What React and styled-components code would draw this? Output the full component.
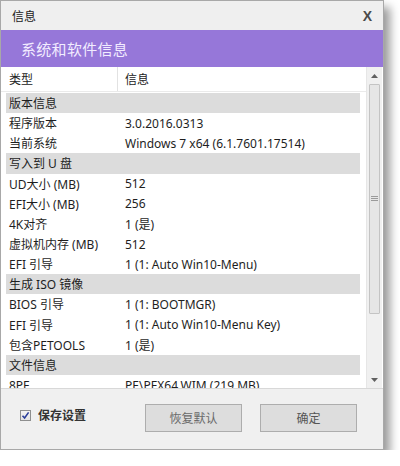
import React from 'react'
import styled, { createGlobalStyle } from 'styled-components'

const Global = createGlobalStyle`
  html, body { margin: 0; padding: 0; background: #ffffff; }
  body { font-family: "Noto Sans", "Noto Sans CJK SC", sans-serif; }
`

const Window = styled.div`
  width: 382px;
  height: 448px;
  border: 1px solid #a8a8a8;
  background: #f0f0f0;
  display: flex;
  flex-direction: column;
  box-shadow: 6px 7px 9px rgba(0, 0, 0, 0.4);
  overflow: hidden;
`

const TitleBar = styled.div`
  height: 29px;
  flex: none;
  display: flex;
  align-items: center;
  justify-content: space-between;
  padding: 0 11px 0 11px;
  background: #efefef;
  font-size: 12px;
  color: #222;
`

const Close = styled.span`
  font-family: "Liberation Sans", sans-serif;
  font-size: 14px;
  font-weight: bold;
  color: #4a4a4a;
`

const Banner = styled.div`
  height: 37px;
  flex: none;
  display: flex;
  align-items: center;
  padding-left: 20px;
  background: #9677d9;
  color: #f2ecff;
  font-size: 15px;
  letter-spacing: 0.3px;
`

const ListArea = styled.div`
  height: 321px;
  flex: none;
  display: flex;
  background: #ffffff;
  border-bottom: 1px solid #d8d8d8;
  overflow: hidden;
`

const Table = styled.div`
  flex: 1;
  display: flex;
  flex-direction: column;
  padding: 0 6px 0 5px;
`

const HeaderRow = styled.div`
  height: 24px;
  flex: none;
  display: grid;
  grid-template-columns: 112px 1fr;
  border-bottom: 1px solid #eaeaea;
  margin: 0 -6px 1px -5px;
  padding: 0 6px 0 5px;
  font-size: 12px;
  color: #222;
`

const HeadCell = styled.div`
  display: flex;
  align-items: center;
  padding-left: ${p => (p.$first ? '3px' : '7px')};
  border-right: ${p => (p.$first ? '1px solid #e2e2e2' : 'none')};
`

const Row = styled.div`
  height: 20.15px;
  flex: none;
  display: grid;
  grid-template-columns: 113px 1fr;
  align-items: center;
  font-size: 12px;
  color: #1e1e1e;
  background: ${p => (p.$group ? '#dcdcdc' : 'transparent')};
  white-space: nowrap;
`

const Cell = styled.div`
  padding-left: ${p => (p.$first ? '3px' : '6px')};
`

const Scrollbar = styled.div`
  width: 15px;
  flex: none;
  margin-right: 1px;
  display: flex;
  flex-direction: column;
  align-items: center;
  background: #f0f0f0;
  border-left: 1px solid #e6e6e6;
`

const Arrow = styled.div`
  height: 17px;
  flex: none;
  display: flex;
  align-items: center;
  justify-content: center;
`

const Thumb = styled.div`
  width: 11px;
  height: 230px;
  flex: none;
  box-sizing: border-box;
  border: 1px solid #c4c4c4;
  background: #e6e6e6;
  border-radius: 1px;
  display: flex;
  align-items: center;
  justify-content: center;
`

const Track = styled.div`
  flex: 1;
`

const Footer = styled.div`
  flex: 1;
  display: flex;
  align-items: center;
  padding: 0 26px 0 19px;
  background: #f0f0f0;
`

const Check = styled.label`
  display: flex;
  align-items: center;
  gap: 7px;
  font-size: 12px;
  color: #333;
  font-weight: 600;
  margin-right: auto;
  margin-top: -8px;
`

const Box = styled.span`
  width: 11px;
  height: 11px;
  box-sizing: border-box;
  border: 1px solid #8e8f8f;
  background: linear-gradient(#f4f4f4, #e4e4e4);
  display: flex;
  align-items: center;
  justify-content: center;
`

const Button = styled.div`
  width: 97px;
  height: 28px;
  box-sizing: border-box;
  margin-left: ${p => p.$gap || 0}px;
  margin-top: -3px;
  border: 1px solid #adadad;
  background: #dddddd;
  display: flex;
  align-items: center;
  justify-content: center;
  font-size: 12px;
  color: ${p => p.$color || '#555'};
`

const rows = [
  ['版本信息', '', true],
  ['程序版本', '3.0.2016.0313'],
  ['当前系统', 'Windows 7 x64 (6.1.7601.17514)'],
  ['写入到 U 盘', '', true],
  ['UD大小 (MB)', '512'],
  ['EFI大小 (MB)', '256'],
  ['4K对齐', '1 (是)'],
  ['虚拟机内存 (MB)', '512'],
  ['EFI 引导', '1 (1: Auto Win10-Menu)'],
  ['生成 ISO 镜像', '', true],
  ['BIOS 引导', '1 (1: BOOTMGR)'],
  ['EFI 引导', '1 (1: Auto Win10-Menu Key)'],
  ['包含PETOOLS', '1 (是)'],
  ['文件信息', '', true],
  ['8PE', 'PE\\PEX64.WIM (219 MB)'],
]

export default function App() {
  return (
    <>
      <Global />
      <Window>
        <TitleBar>
          <span>信息</span>
          <Close>X</Close>
        </TitleBar>
        <Banner>系统和软件信息</Banner>
        <ListArea>
          <Table>
            <HeaderRow>
              <HeadCell $first>类型</HeadCell>
              <HeadCell>信息</HeadCell>
            </HeaderRow>
            {rows.map(([k, v, g], i) => (
              <Row key={i} $group={g}>
                <Cell $first>{k}</Cell>
                <Cell>{v}</Cell>
              </Row>
            ))}
          </Table>
          <Scrollbar>
            <Arrow>
              <svg width="7" height="4" viewBox="0 0 7 4"><path d="M0 4 L3.5 0 L7 4 Z" fill="#606060" /></svg>
            </Arrow>
            <Thumb>
              <svg width="7" height="6" viewBox="0 0 7 6">
                <path d="M0 0.5 H7 M0 2.5 H7 M0 4.5 H7" stroke="#9a9a9a" strokeWidth="1" />
              </svg>
            </Thumb>
            <Track />
            <Arrow>
              <svg width="7" height="4" viewBox="0 0 7 4"><path d="M0 0 L3.5 4 L7 0 Z" fill="#606060" /></svg>
            </Arrow>
          </Scrollbar>
        </ListArea>
        <Footer>
          <Check>
            <Box>
              <svg width="9" height="9" viewBox="0 0 9 9">
                <path d="M1.5 4.8 L3.6 7 L7.6 1.4" stroke="#2b3f9a" strokeWidth="1.6" fill="none" />
              </svg>
            </Box>
            保存设置
          </Check>
          <Button $color="#6a6a6a">恢复默认</Button>
          <Button $gap={18} $color="#555">确定</Button>
        </Footer>
      </Window>
    </>
  )
}
